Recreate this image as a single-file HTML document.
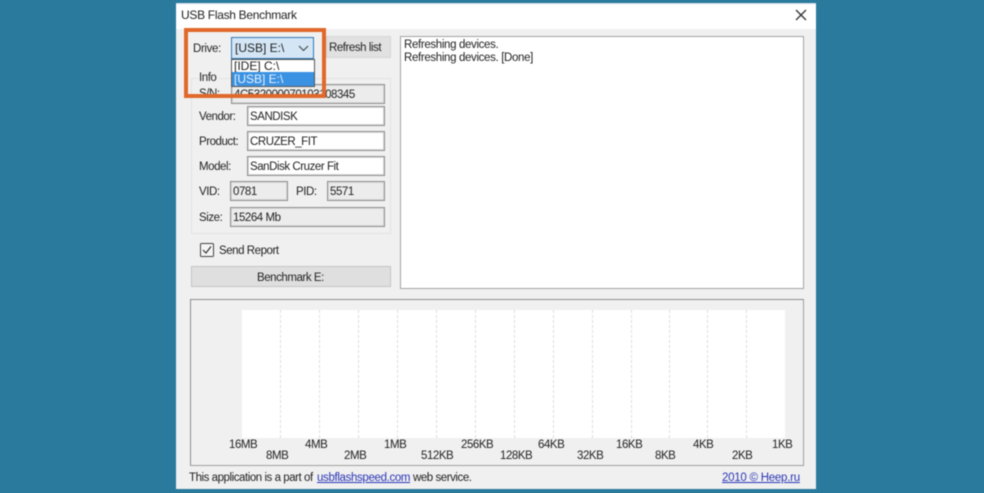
<!DOCTYPE html>
<html><head><meta charset="utf-8"><style>
html,body{margin:0;padding:0}
body{width:984px;height:493px;overflow:hidden;background:#2a7a9d;position:relative;font-family:"Liberation Sans",sans-serif;font-size:11.5px;color:#222}
div,span,a{position:absolute;box-sizing:border-box;white-space:nowrap}
#blur{left:0;top:0;width:984px;height:493px;filter:blur(.4px)}
.t{line-height:14px;letter-spacing:-.45px;margin-top:1px}
.f{border:1px solid #8f8f8f;box-shadow:inset 0 0 0 1px #d8d8d8;padding:3px 0 0 2px;line-height:14px;height:20px;letter-spacing:-.45px}
.w{background:#fff}
.g{background:#ececec}
.col{top:310px;height:128px;background:#fff;border-right:1px dashed #dcdcdc}
a{color:#2a35b5;text-decoration:underline}
</style></head><body><div id="blur">
<div style="left:176px;top:3px;width:640px;height:486px;background:#f0f0f0;border-top:1px solid #cfe0e8"></div>
<div style="left:176px;top:4px;width:640px;height:25px;background:#fff"></div>
<div class="t" style="left:181px;top:7px;font-size:12px;color:#222;letter-spacing:-.3px">USB Flash Benchmark</div>
<svg style="position:absolute;left:795px;top:9px" width="12" height="12" viewBox="0 0 12 12"><path d="M1 1L11 11M11 1L1 11" stroke="#333" stroke-width="1.3" fill="none"/></svg>

<div class="t" style="left:193px;top:41px;letter-spacing:-.35px">Drive:</div>
<div style="left:326px;top:36px;width:65px;height:22px;background:#e1e1e1;border:1px solid #d6d6d6"></div>
<div class="t" style="left:329px;top:40px">Refresh list</div>

<div style="left:400px;top:36px;width:404px;height:253px;background:#fff;border:1px solid #a3a3a3"></div>
<div class="t" style="left:404px;top:38px;line-height:13px;letter-spacing:-.35px">Refreshing devices.<br>Refreshing devices. [Done]</div>

<div style="left:191px;top:78px;width:200px;height:156px;border:1px solid #e2e2e2"></div>
<div class="t" style="left:199px;top:70px;background:#f0f0f0;padding-right:3px">Info</div>

<div class="t" style="left:199px;top:86px">S/N:</div>
<div class="f g" style="left:231px;top:84px;width:154px">4C532000070103108345</div>
<div class="t" style="left:199px;top:109px">Vendor:</div>
<div class="f w" style="left:247px;top:106px;width:138px">SANDISK</div>
<div class="t" style="left:199px;top:134px">Product:</div>
<div class="f w" style="left:247px;top:131px;width:138px">CRUZER_FIT</div>
<div class="t" style="left:199px;top:159px">Model:</div>
<div class="f w" style="left:247px;top:156px;width:138px">SanDisk Cruzer Fit</div>
<div class="t" style="left:199px;top:184px">VID:</div>
<div class="f g" style="left:230px;top:181px;width:58px">0781</div>
<div class="t" style="left:296px;top:184px">PID:</div>
<div class="f g" style="left:327px;top:181px;width:58px">5571</div>
<div class="t" style="left:199px;top:210px">Size:</div>
<div class="f g" style="left:230px;top:207px;width:155px">15264 Mb</div>

<svg style="position:absolute;left:199px;top:242px" width="16" height="16" viewBox="0 0 16 16"><rect x="1.5" y="1.5" width="13" height="13" rx="1" fill="#f4f4f4" stroke="#444"/><path d="M4 8L7 11L12 4.5" stroke="#333" stroke-width="1.2" fill="none"/></svg>
<div class="t" style="left:219px;top:243px">Send Report</div>
<div style="left:191px;top:266px;width:200px;height:21px;background:#dfdfdf;border:1px solid #c4c4c4"></div>
<div class="t" style="left:257px;top:270px">Benchmark E:</div>

<!-- chart -->
<div style="left:190px;top:299px;width:614px;height:167px;background:#f0f0f0;border:1px solid #a0a0a0;border-top-color:#8c8c8c;border-left-color:#8c8c8c"></div>
<div class="col" style="left:242px;width:39px"></div>
<div class="col" style="left:281px;width:39px"></div>
<div class="col" style="left:320px;width:39px"></div>
<div class="col" style="left:359px;width:39px"></div>
<div class="col" style="left:398px;width:39px"></div>
<div class="col" style="left:437px;width:39px"></div>
<div class="col" style="left:476px;width:39px"></div>
<div class="col" style="left:515px;width:39px"></div>
<div class="col" style="left:554px;width:39px"></div>
<div class="col" style="left:593px;width:39px"></div>
<div class="col" style="left:632px;width:38px"></div>
<div class="col" style="left:670px;width:38px"></div>
<div class="col" style="left:708px;width:39px"></div>
<div class="col" style="left:747px;width:38px;border-right:0"></div>

<div class="t" style="left:229px;top:437px">16MB</div>
<div class="t" style="left:266px;top:448px">8MB</div>
<div class="t" style="left:305px;top:437px">4MB</div>
<div class="t" style="left:344px;top:448px">2MB</div>
<div class="t" style="left:384px;top:437px">1MB</div>
<div class="t" style="left:421px;top:448px">512KB</div>
<div class="t" style="left:461px;top:437px">256KB</div>
<div class="t" style="left:500px;top:448px">128KB</div>
<div class="t" style="left:538px;top:437px">64KB</div>
<div class="t" style="left:577px;top:448px">32KB</div>
<div class="t" style="left:616px;top:437px">16KB</div>
<div class="t" style="left:655px;top:448px">8KB</div>
<div class="t" style="left:693px;top:437px">4KB</div>
<div class="t" style="left:732px;top:448px">2KB</div>
<div class="t" style="left:772px;top:437px">1KB</div>

<div class="t" style="left:189px;top:470px">This application is a part of</div>
<a class="t" style="left:317px;top:470px;letter-spacing:-.35px" href="#">usbflashspeed.com</a>
<div class="t" style="left:413px;top:470px">web service.</div>
<a class="t" style="left:722px;top:470px;letter-spacing:-.25px" href="#">2010 © Heep.ru</a>

<!-- combo -->
<div style="left:231px;top:37px;width:83px;height:22px;background:#d4e6f5;border:1px solid #2f77b5"></div>
<div class="t" style="left:235px;top:40px;font-size:12px;letter-spacing:0">[USB] E:\</div>
<svg style="position:absolute;left:298px;top:45px" width="11" height="7" viewBox="0 0 11 7"><path d="M1 1L5.5 5.5L10 1" stroke="#444" stroke-width="1.1" fill="none"/></svg>
<div style="left:231px;top:59px;width:84px;height:28px;background:#fff;border:1px solid #555"></div>
<div class="t" style="left:234px;top:58px;font-size:12px;letter-spacing:0">[IDE] C:\</div>
<div style="left:232px;top:72px;width:82px;height:14px;background:#3b92e3"></div>
<div class="t" style="left:234px;top:71px;color:#e8f2fb;font-size:12px;letter-spacing:0">[USB] E:\</div>

<!-- orange highlight -->
<div style="left:184px;top:28px;width:142px;height:70px;border:4px solid #e0682a"></div>
</div></body></html>
